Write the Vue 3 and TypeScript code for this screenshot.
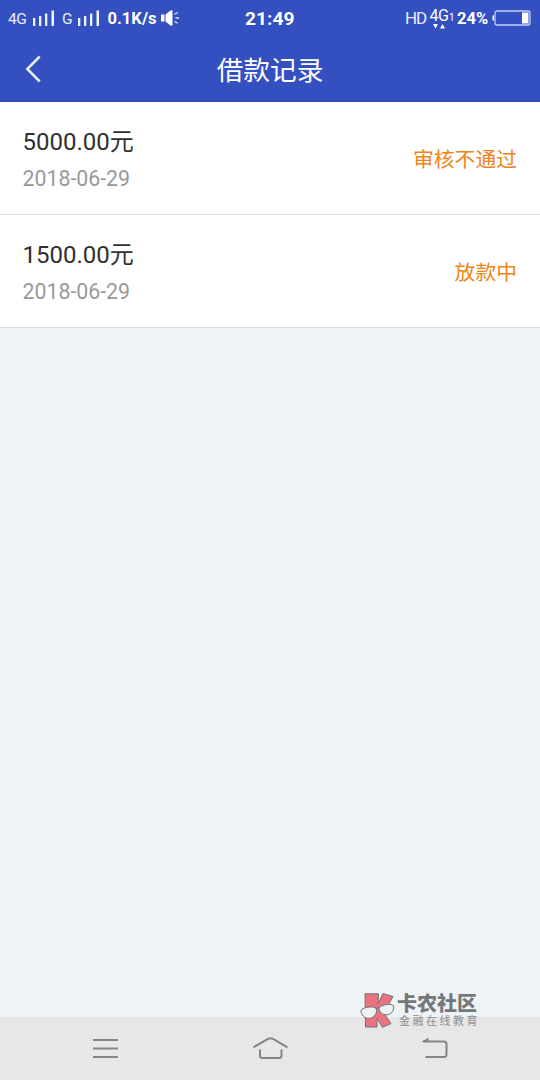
<script setup lang="ts">
interface LoanRecord {
  amount: string
  date: string
  status: string
}

const records: LoanRecord[] = [
  { amount: '5000.00元', date: '2018-06-29', status: '审核不通过' },
  { amount: '1500.00元', date: '2018-06-29', status: '放款中' },
]
</script>

<template>
  <div class="screen">
    <header class="top">
      <div class="statusbar">
        <div class="left">
          <span class="net net-a">4G</span>
          <svg class="bars" width="22" height="16" viewBox="0 0 22 16" fill="#eef3ff">
            <path d="M0 8h2.3v8H0zM6 6h2.3v10H6zM12 3.500h2.300V16H12zM18.500 0.500h2.500V16h-2.500z" />
          </svg>
          <span class="net net-b">G</span>
          <svg class="bars" width="22" height="16" viewBox="0 0 22 16" fill="#eef3ff">
            <path d="M0 8h2.300v8H0zM6 6h2.300v10H6zM12 3.500h2.300V16H12zM18.500 0.500h2.500V16h-2.500z" />
          </svg>
          <span class="speed">0.1K/s</span>
          <svg class="speaker" width="19" height="16" viewBox="0 0 19 16" fill="#fff">
            <path d="M0 4.500h3.500v7H0zM4.500 4.500 9.500.5H11.500v15H9.500l-5-4z" />
            <path d="m13.500 4.300 3.300-1.800M14.500 8h3.500M13.500 11.500l3.300 1.800" stroke="#dfe6fb" stroke-width="1.300" fill="none" />
          </svg>
        </div>
        <span class="clock">21:49</span>
        <div class="right">
          <span class="hd">HD</span>
          <div class="volte">
            <span class="volte-text">4G</span>
            <svg width="12" height="5" viewBox="0 0 12 5" fill="#fff">
              <path d="M0 0h5L2.500 4.500zM7 4.500h5L9.500 0z" />
            </svg>
          </div>
          <span class="sim">1</span>
          <span class="percent">24%</span>
          <svg class="battery" width="39" height="16" viewBox="0 0 39 16">
            <rect x="3" y="1" width="35" height="14" rx="2" fill="none" stroke="#c3cef2" stroke-width="1.300" />
            <path d="M.5 5.500H2v5H.5z" fill="#fff" />
            <path d="M30 2.500h6.500v11H30z" fill="#fff" />
          </svg>
        </div>
      </div>
      <div class="titlebar">
        <svg class="back" width="16" height="28" viewBox="0 0 16 28" fill="none" stroke="#e8eefc" stroke-width="2.500">
          <path d="M14.700 1.500 2.300 14l12.400 12.500" />
        </svg>
        <h1>借款记录</h1>
      </div>
    </header>

    <main>
      <article v-for="record in records" :key="record.amount" class="row">
        <div>
          <div class="amount">{{ record.amount }}</div>
          <div class="date">{{ record.date }}</div>
        </div>
        <div class="state">{{ record.status }}</div>
      </article>
    </main>

    <nav class="nav">
      <svg width="540" height="63" viewBox="0 0 540 63" fill="none" stroke="#858585" stroke-width="2" stroke-linejoin="round">
        <path d="M93 23h25M93 31.500h25M93 40h25" />
        <path d="m253.500 30.300 14.500-8.500q2.500-1.300 5 0l14.500 8.500" />
        <path d="M260 32.500v6q0 2.500 2.500 2.500h16.500q2.500 0 2.500-2.500v-6" />
        <path d="M423 24.500h21q2.500 0 2.500 2.500v10.500q0 2.500-2.500 2.500h-18.500" />
        <path d="m421.500 25 7-4.500V25z" fill="#858585" stroke="none" />
      </svg>
    </nav>

    <div class="watermark">
      <svg width="36" height="38" viewBox="0 0 36 38" stroke="#6f7275" stroke-width="1" stroke-linejoin="round">
        <path d="M5 1.800h13.500l-.5 10L23 1.500 33 4.500 26 17 23.500 20.500 31 31.500 22.500 35.300 17 26.500V35H5.500z" fill="#e9747f" />
        <path d="M.8 18.500C3 14.800 15 13.500 16.300 17c1.200 4-2 9-7 9.300-5 .2-8-3.300-8.500-7.800z" fill="#eff2f4" />
        <path d="M19 16C21 12.500 32.500 10.800 33.500 14c1 3.800-2 8.500-6.500 8.800-4.500.3-7.800-2.800-8-6.800z" fill="#eff2f4" />
        <path d="m16 16.500 3-1" fill="none" />
      </svg>
      <div class="brand">
        <div class="brand-name">卡农社区</div>
        <div class="brand-sub">金融在线教育</div>
      </div>
    </div>
  </div>
</template>

<style>
body {
  margin: 0;
}
</style>

<style scoped>
.screen {
  position: relative;
  width: 540px;
  height: 1080px;
  display: flex;
  flex-direction: column;
  overflow: hidden;
  background: #eef3f6;
  font-family: Roboto, "Noto Sans CJK SC", sans-serif;
}
svg {
  display: block;
  flex: none;
}
.top {
  height: 102px;
  background: #334fc0;
  color: #fff;
}
.statusbar {
  height: 37px;
  display: grid;
  grid-template-columns: 245px 50px 245px;
  align-items: center;
  line-height: 20px;
  white-space: nowrap;
}
.left,
.right {
  display: flex;
  align-items: center;
}
.bars {
  margin-top: -1px;
}
.net {
  font-size: 15.5px;
  font-weight: 400;
  line-height: 22px;
  color: #e8edfc;
}
.net-a {
  width: 25px;
  margin-left: 8px;
  letter-spacing: -0.5px;
}
.net-b {
  width: 16px;
  margin-left: 7px;
}
.speed {
  width: 53px;
  margin-left: 7.5px;
  font-size: 16.6px;
  font-weight: 700;
}
.speaker {
  margin-top: -1px;
}
.clock {
  padding-top: 1px;
  font-size: 19.2px;
  font-weight: 700;
}
.hd {
  width: 23px;
  margin-left: 110px;
  margin-top: -1px;
  font-size: 17px;
  letter-spacing: -1.2px;
  color: #e8edfc;
}
.volte {
  width: 20px;
  height: 22px;
  margin-left: 1px;
  display: flex;
  flex-direction: column;
  align-items: center;
}
.volte-text {
  height: 16px;
  line-height: 15px;
  font-size: 16px;
  letter-spacing: -0.5px;
}
.sim {
  width: 8px;
  margin-top: -2px;
  font-size: 10px;
}
.percent {
  width: 35px;
  font-size: 16.5px;
  font-weight: 700;
}
.battery {
  margin-top: -1px;
}
.titlebar {
  position: relative;
  height: 65px;
  display: flex;
  align-items: center;
  justify-content: center;
}
.back {
  position: absolute;
  left: 25px;
  top: 18px;
}
h1 {
  margin: 0;
  padding-top: 2px;
  font-size: 26.7px;
  line-height: 40px;
  font-weight: 400;
}
.row {
  height: 113px;
  box-sizing: border-box;
  padding: 4px 23px 0 22.5px;
  display: flex;
  align-items: center;
  justify-content: space-between;
  background: #fff;
  border-bottom: 1px solid #d9dbdc;
}
.amount {
  color: #303030;
  font-size: 24px;
  line-height: 36px;
}
.date {
  margin: 1px 0 -1px;
  color: #999;
  font-size: 21.3px;
  line-height: 36px;
}
.state {
  color: #ef8418;
  font-size: 20.8px;
  line-height: 32px;
}
.nav {
  height: 63px;
  margin-top: auto;
  background: #e7e7e7;
}
.watermark {
  position: absolute;
  left: 360px;
  top: 992px;
  display: flex;
}
.brand {
  margin-left: 1px;
  white-space: nowrap;
}
.brand-name {
  color: #75787a;
  font-size: 20px;
  line-height: 25px;
  font-weight: 900;
}
.brand-sub {
  margin-left: 2px;
  color: #999b9d;
  font-size: 11px;
  line-height: 10px;
  letter-spacing: 2.5px;
  font-weight: 500;
}
</style>
